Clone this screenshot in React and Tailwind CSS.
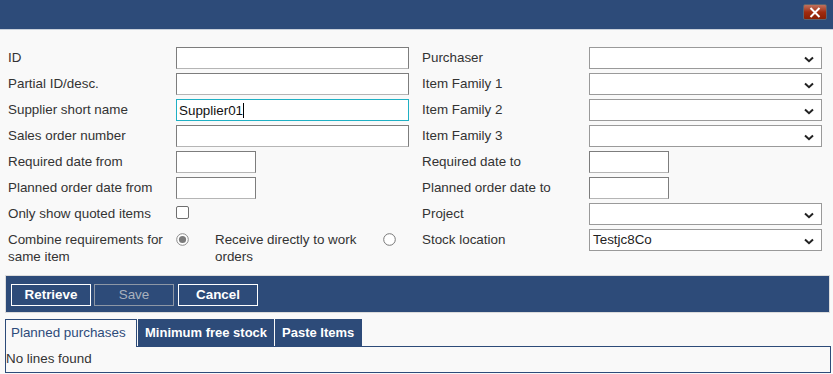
import React from "react";

const BLUE = "bg-[#2d4b79]";

function Chevron() {
  return (
    <svg width="10" height="7" viewBox="0 0 10 7" className="absolute right-[7px] top-[8px]">
      <path d="M1 1.5 L5 5.2 L9 1.5" fill="none" stroke="#222" strokeWidth="2" />
    </svg>
  );
}

function Select({ value }) {
  return (
    <div className="relative h-[22px] w-[233px] border border-[#9a9a9a] bg-white pl-[3px] text-[13.4px] leading-[20px] text-[#222]">
      {value}
      <Chevron />
    </div>
  );
}

function TextInput({ value, focused, w = "w-[233px]" }) {
  return (
    <div
      className={`h-[22px] ${w} border bg-white pl-[2px] text-[13.4px] leading-[20px] text-[#111] ${
        focused ? "border-[#1fb0c4]" : "border-[#7d7d7d] border-b-[#b5b5b5]"
      }`}
    >
      {value}
      {focused && <span className="inline-block h-[15px] w-px translate-y-[3px] bg-black" />}
    </div>
  );
}

function Label({ children }) {
  return <div className="pt-[2px] text-[13.4px] leading-[17px] text-[#333]">{children}</div>;
}

function Radio({ checked }) {
  return (
    <svg width="13" height="13" viewBox="0 0 13 13" className="mt-[4px] shrink-0">
      <circle cx="6.5" cy="6.5" r="5.8" fill="white" stroke={checked ? "#8a8a8a" : "#777"} strokeWidth="1" />
      {checked && <circle cx="6.5" cy="6.5" r="3.6" fill="#7b7b7b" />}
    </svg>
  );
}

function Row({ label, children, lw = "w-[168px]" }) {
  return (
    <div className="flex min-h-[22px] items-start">
      <div className={`${lw} shrink-0`}>
        <Label>{label}</Label>
      </div>
      <div>{children}</div>
    </div>
  );
}

export default function App() {
  return (
    <div className="h-[374px] w-[833px] overflow-hidden bg-[#f9f9f9] font-['Liberation_Sans',Arial,sans-serif]">
      <div className={`flex h-[30px] items-start justify-end ${BLUE} border-b border-[#c9d0da] pr-[6px] pt-[4px]`}>
        <div className="flex h-[16px] w-[24px] items-center justify-center rounded-[2px] border border-[#5b6470] bg-gradient-to-b from-[#c0705c] via-[#a22c0e] to-[#8a1f04]">
          <svg width="12" height="11" viewBox="0 0 12 11">
            <path d="M1.5 1 L10.5 10 M10.5 1 L1.5 10" stroke="white" strokeWidth="2" />
          </svg>
        </div>
      </div>

      <div className="flex gap-[13px] pl-[8px] pt-[17px]">
        <div className="flex flex-col gap-[4px]">
          <Row label="ID"><TextInput /></Row>
          <Row label="Partial ID/desc."><TextInput /></Row>
          <Row label="Supplier short name"><TextInput value="Supplier01" focused /></Row>
          <Row label="Sales order number"><TextInput /></Row>
          <Row label="Required date from"><TextInput w="w-[80px]" /></Row>
          <Row label="Planned order date from"><TextInput w="w-[80px]" /></Row>
          <Row label="Only show quoted items">
            <div className="mt-[3px] h-[13px] w-[13px] rounded-[2px] border border-[#6f6f6f] bg-white" />
          </Row>
          <Row label={<>Combine requirements for<br />same item</>}>
            <div className="flex w-[233px] items-start">
              <Radio checked />
              <div className="ml-[26px] w-[160px]">
                <Label>Receive directly to work orders</Label>
              </div>
              <div className="ml-[8px]"><Radio /></div>
            </div>
          </Row>
        </div>

        <div className="flex flex-col gap-[4px]">
          <Row lw="w-[167px]" label="Purchaser"><Select /></Row>
          <Row lw="w-[167px]" label="Item Family 1"><Select /></Row>
          <Row lw="w-[167px]" label="Item Family 2"><Select /></Row>
          <Row lw="w-[167px]" label="Item Family 3"><Select /></Row>
          <Row lw="w-[167px]" label="Required date to"><TextInput w="w-[80px]" /></Row>
          <Row lw="w-[167px]" label="Planned order date to"><TextInput w="w-[80px]" /></Row>
          <Row lw="w-[167px]" label="Project"><Select /></Row>
          <Row lw="w-[167px]" label="Stock location"><Select value="Testjc8Co" /></Row>
        </div>
      </div>

      <div className="px-[5px] pt-[10px]">
        <div className={`flex h-[38px] w-[825px] items-center gap-[3px] border border-[#dcdcdc] ${BLUE} pl-[5px] pt-[2px]`}>
          <div className="flex h-[22px] w-[80px] items-center justify-center border border-white text-[13.4px] font-bold text-white">Retrieve</div>
          <div className="flex h-[22px] w-[80px] items-center justify-center border border-[#8d97a6] text-[13.4px] text-[#a9b1bd]">Save</div>
          <div className="ml-[1px] flex h-[22px] w-[80px] items-center justify-center border border-white text-[13.4px] font-bold text-white">Cancel</div>
        </div>

        <div className="mt-[6px] flex h-[28px] items-stretch">
          <div className="flex w-[132px] items-center border border-b-0 border-[#2d4b79] bg-[#f9f9f9] pl-[5px] text-[13.4px] text-[#2d4b79]">Planned purchases</div>
          <div className={`ml-px flex w-[136px] items-center ${BLUE} pl-[7px] text-[13px] font-bold text-white`}>Minimum free stock</div>
          <div className={`ml-px flex w-[87px] items-center ${BLUE} pl-[7px] text-[13px] font-bold text-white`}>Paste Items</div>
        </div>
        <div className="-mt-px flex h-[27px] w-[826px] items-center border border-[#2d4b79] text-[13.4px] text-[#333]">
          No lines found
        </div>
      </div>
    </div>
  );
}
